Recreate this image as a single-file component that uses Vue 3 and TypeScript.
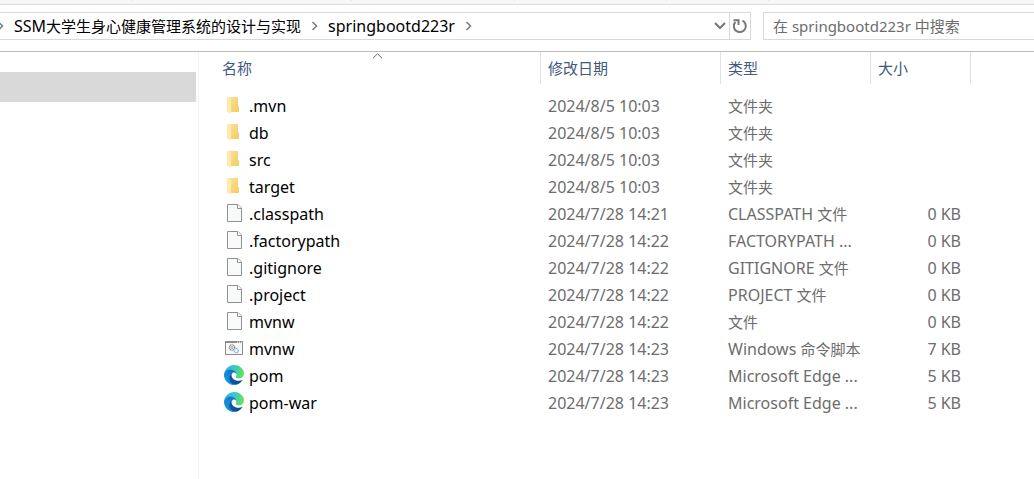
<script setup lang="ts">
import { ref } from 'vue'

type IconKind = 'folder' | 'file' | 'script' | 'edge'

interface Entry {
  name: string
  icon: IconKind
  modified: string
  type: string
  size: string
}

interface Run {
  text: string
  latin: boolean
}

const entries: Entry[] = [
  { name: '.mvn', icon: 'folder', modified: '2024/8/5 10:03', type: '文件夹', size: '' },
  { name: 'db', icon: 'folder', modified: '2024/8/5 10:03', type: '文件夹', size: '' },
  { name: 'src', icon: 'folder', modified: '2024/8/5 10:03', type: '文件夹', size: '' },
  { name: 'target', icon: 'folder', modified: '2024/8/5 10:03', type: '文件夹', size: '' },
  { name: '.classpath', icon: 'file', modified: '2024/7/28 14:21', type: 'CLASSPATH 文件', size: '0 KB' },
  { name: '.factorypath', icon: 'file', modified: '2024/7/28 14:22', type: 'FACTORYPATH ...', size: '0 KB' },
  { name: '.gitignore', icon: 'file', modified: '2024/7/28 14:22', type: 'GITIGNORE 文件', size: '0 KB' },
  { name: '.project', icon: 'file', modified: '2024/7/28 14:22', type: 'PROJECT 文件', size: '0 KB' },
  { name: 'mvnw', icon: 'file', modified: '2024/7/28 14:22', type: '文件', size: '0 KB' },
  { name: 'mvnw', icon: 'script', modified: '2024/7/28 14:23', type: 'Windows 命令脚本', size: '7 KB' },
  { name: 'pom', icon: 'edge', modified: '2024/7/28 14:23', type: 'Microsoft Edge ...', size: '5 KB' },
  { name: 'pom-war', icon: 'edge', modified: '2024/7/28 14:23', type: 'Microsoft Edge ...', size: '5 KB' },
]

const crumbs = ['SSM大学生身心健康管理系统的设计与实现', 'springbootd223r']
const query = ref('')

// Latin runs are set one pixel larger than the Chinese ones.
function runs(text: string): Run[] {
  return (text.match(/[\x20-\x7e]+|[^\x20-\x7e]+/g) ?? []).map((t) => ({
    text: t,
    latin: /^[\x20-\x7e]/.test(t),
  }))
}
</script>

<template>
  <div class="explorer">
    <div class="ribbon"><i></i><i></i><i></i><i></i><i></i></div>

    <header class="toolbar">
      <div class="address">
        <nav class="crumbs" aria-label="路径">
          <svg class="lead" width="4" height="10" viewBox="3 0 4 10" aria-hidden="true">
            <path d="M1.500 1 5.500 5 1.500 9" />
          </svg>
          <template v-for="crumb in crumbs" :key="crumb">
            <a href="#" class="crumb"><span v-for="(r, i) in runs(crumb)" :key="i" :class="{ latin: r.latin }">{{ r.text }}</span></a>
            <svg class="sep" width="7" height="10" viewBox="0 0 7 10" aria-hidden="true">
              <path d="M1.500 1 5.500 5 1.500 9" />
            </svg>
          </template>
        </nav>
        <button class="drop" type="button" aria-label="历史记录">
          <svg width="12" height="8" viewBox="0 0 12 8"><path d="M1 1 6 6 11 1" /></svg>
        </button>
        <button class="refresh" type="button" aria-label="刷新">
          <svg width="16" height="16" viewBox="0 0 16 16">
            <path d="M10.500 2.700A6 6 0 1 1 3.400 4" />
            <path d="M1.500 2.300H6.500V7" />
          </svg>
        </button>
      </div>
      <input v-model="query" class="search" type="text" aria-label="搜索" placeholder="在 springbootd223r 中搜索" />
    </header>

    <div class="body">
      <aside class="tree"><div class="selected"></div></aside>
      <main class="list">
        <table>
          <colgroup>
            <col class="c-name" /><col class="c-date" /><col class="c-type" /><col class="c-size" />
          </colgroup>
          <thead>
            <tr>
              <th>
                <button type="button">名称</button>
                <svg class="sort" width="11" height="6" viewBox="0 0 11 6" aria-hidden="true">
                  <path d="M1 5.200 5.500 .8 10 5.200" />
                </svg>
              </th>
              <th><button type="button">修改日期</button></th>
              <th><button type="button">类型</button></th>
              <th><button type="button">大小</button></th>
            </tr>
          </thead>
          <tbody>
            <tr v-for="(e, n) in entries" :key="n">
              <td class="name">
                <div class="entry">
                  <svg v-if="e.icon === 'folder'" width="20" height="20" viewBox="0 0 20 20">
                    <defs>
                      <linearGradient :id="`fold${n}`" x1="0" y1="0" x2="1" y2="1">
                        <stop offset="0" stop-color="#fbe29a" /><stop offset="1" stop-color="#f2cb62" />
                      </linearGradient>
                    </defs>
                    <path d="M5 2H14V11H15V17H5Z" :fill="`url(#fold${n})`" />
                    <path d="M3 2H5L7 4V18.500L3 17Z" fill="#ffe9ab" />
                  </svg>
                  <svg v-else-if="e.icon === 'file'" width="20" height="20" viewBox="0 0 20 20">
                    <path d="M3.500 1.500H14L17.500 5V18.500H3.500Z" fill="#f8f9f9" stroke="#8f9192" />
                    <path d="M13.500 1.500V5.500H17.500" fill="#fff" stroke="#8f9192" />
                  </svg>
                  <svg v-else-if="e.icon === 'script'" width="20" height="20" viewBox="0 0 20 20">
                    <rect x="1.500" y="3.500" width="17" height="13" fill="#f8f8f8" stroke="#8b8d8f" />
                    <path d="M1 4H19" stroke="#8b8d8f" stroke-width="2" />
                    <path d="M13 4.200h1M15 4.200h1M17 4.200h1" stroke="#fff" />
                    <circle cx="8" cy="9.500" r="2.700" fill="#eee" stroke="#85878a" stroke-width="1.200" stroke-dasharray="1.200 .5" />
                    <circle cx="8" cy="9.500" r="1" fill="#fff" stroke="#85878a" stroke-width=".7" />
                    <circle cx="12.200" cy="12.500" r="2.200" fill="#e9f5fc" stroke="#7fb2d0" stroke-width="1.200" stroke-dasharray="1.100 .4" />
                    <circle cx="12.200" cy="12.500" r=".7" fill="#fff" />
                  </svg>
                  <svg v-else width="20" height="20" viewBox="0 0 256 256">
                    <defs>
                      <linearGradient :id="`deep${n}`" x1="60" y1="177" x2="240" y2="177" gradientUnits="userSpaceOnUse">
                        <stop offset="0" stop-color="#0c59a4" /><stop offset="1" stop-color="#114a8b" />
                      </linearGradient>
                      <linearGradient :id="`mid${n}`" x1="150" y1="100" x2="45" y2="225" gradientUnits="userSpaceOnUse">
                        <stop offset="0" stop-color="#1470b8" /><stop offset=".5" stop-color="#1689d6" /><stop offset="1" stop-color="#1291e0" />
                      </linearGradient>
                      <linearGradient :id="`top${n}`" x1="20" y1="60" x2="240" y2="110" gradientUnits="userSpaceOnUse">
                        <stop offset="0" stop-color="#2fb0e6" /><stop offset=".35" stop-color="#33c3dc" /><stop offset=".65" stop-color="#46cf9f" /><stop offset="1" stop-color="#66e25e" />
                      </linearGradient>
                    </defs>
                    <path :fill="`url(#deep${n})`" d="M231 190.500a93.700 93.700 0 0 1-10.500 4.700 101.900 101.900 0 0 1-35.900 6.500c-47.300 0-88.500-32.500-88.500-74.300a31.500 31.500 0 0 1 16.400-27.300c-42.800 1.800-53.800 46.400-53.800 72.500 0 73.900 68.100 81.400 82.800 81.400 7.900 0 19.800-2.300 27-4.600l1.300-.4a128.300 128.300 0 0 0 66.600-52.800 4 4 0 0 0-5.400-5.700z" />
                    <path :fill="`url(#mid${n})`" d="M105.700 241.400a79.200 79.200 0 0 1-22.700-21.300 80.700 80.700 0 0 1 29.500-120c3.200-1.500 8.500-4.100 15.600-4a32.400 32.400 0 0 1 25.700 13 31.900 31.900 0 0 1 6.300 18.700c0-.2 24.500-79.600-80-79.600-43.900 0-80 41.600-80 78.200a130.200 130.200 0 0 0 12.100 56 128 128 0 0 0 156.400 67.100 75.500 75.500 0 0 1-62.800-8z" />
                    <path :fill="`url(#top${n})`" d="M152.300 148.900c-.8 1-3.300 2.500-3.300 5.700 0 2.600 1.700 5.100 4.700 7.200 14.400 10 41.500 8.700 41.600 8.700a59.600 59.600 0 0 0 30.300-8.300 61.400 61.400 0 0 0 30.400-52.900c.3-22.400-8-37.300-11.300-43.900C223.500 23.900 177.700 0 128 0A128 128 0 0 0 0 126.200c.5-36.500 36.800-66 80-66 3.500 0 23.500.3 42 10 16.300 8.600 24.900 18.900 30.800 29.200 6.200 10.700 7.300 24.100 7.300 29.500s-2.700 13.300-7.800 20z" />
                  </svg>
                  <span class="latin">{{ e.name }}</span>
                </div>
              </td>
              <td class="latin">{{ e.modified }}</td>
              <td><span v-for="(r, i) in runs(e.type)" :key="i" :class="{ latin: r.latin }">{{ r.text }}</span></td>
              <td class="latin size">{{ e.size }}</td>
            </tr>
          </tbody>
        </table>
      </main>
    </div>
  </div>
</template>

<style>
body {
  margin: 0;
  background: #fff;
}
</style>

<style scoped>
.explorer {
  display: flex;
  flex-direction: column;
  min-height: 100vh;
  overflow: hidden;
  font-family: "Noto Sans", "Noto Sans CJK SC", sans-serif;
  font-size: 15px;
  color: #6d6d6d;
}
button,
input {
  font: inherit;
  color: inherit;
  margin: 0;
  padding: 0;
  border: 0;
  background: none;
  border-radius: 0;
}
.latin {
  font-size: 16px;
  white-space: pre;
}
.ribbon {
  display: grid;
  grid-template-columns: 132px 220px 163px 152px 102px;
  height: 4px;
  background: #f5f6f7;
  border-bottom: 1px solid #dadbdc;
}
.ribbon i {
  height: 1px;
  border-right: 1px solid #e2e3e4;
}
.toolbar {
  display: flex;
  gap: 12px;
  padding: 7px 0 11px;
  border-bottom: 1px solid #bcbcbc;
}
.address {
  flex: 1;
  display: flex;
  height: 26px;
  border: 1px solid #d9d9d9;
  border-left: 0;
}
.crumbs {
  flex: 1;
  display: flex;
  align-items: center;
}
.crumb {
  display: flex;
  align-items: baseline;
  margin: 0 10px;
  color: #000;
  text-decoration: none;
  line-height: 26px;
  white-space: nowrap;
}
.crumbs svg,
.drop svg,
.refresh svg {
  fill: none;
  stroke: #777;
  stroke-width: 2;
}
.crumbs svg {
  stroke-width: 1.5;
}
.drop {
  display: flex;
  align-items: center;
  justify-content: center;
  width: 18px;
}
.refresh {
  display: flex;
  align-items: center;
  justify-content: center;
  box-sizing: border-box;
  width: 21px;
  border-left: 1px solid #d9d9d9;
}
.search {
  box-sizing: border-box;
  width: 271px;
  height: 28px;
  padding-left: 9px;
  border: 1px solid #d9d9d9;
  border-right: 0;
}
.search::placeholder {
  color: #6d6d6d;
  opacity: 1;
}
.body {
  flex: 1;
  display: flex;
}
.tree {
  box-sizing: border-box;
  width: 199px;
  padding: 20px 2px 0 0;
  border-right: 1px solid #f2f2f2;
}
.selected {
  height: 30px;
  background: #d9d9d9;
}
.list {
  flex: 1;
  padding-left: 15px;
}
table {
  width: 757px;
  table-layout: fixed;
  border-collapse: separate;
  border-spacing: 0;
}
.c-name {
  width: 327px;
}
.c-date {
  width: 180px;
}
.c-type {
  width: 150px;
}
.c-size {
  width: 100px;
}
th {
  position: relative;
  height: 32px;
  padding: 0 7px 0 8px;
  border-right: 1px solid #e2e2e2;
  font-weight: 400;
  text-align: left;
}
th + th {
  padding-left: 7px;
}
th button {
  display: block;
  width: 100%;
  line-height: 32px;
  text-align: left;
  color: #42597c;
}
.sort {
  position: absolute;
  top: 1px;
  left: 158px;
  fill: none;
  stroke: #6a6a6a;
}
tbody::before {
  content: "";
  display: block;
  height: 9px;
}
td {
  height: 27px;
  padding: 0 8px 0 7px;
  line-height: 26px;
  vertical-align: top;
  white-space: nowrap;
}
.name {
  padding: 0 8px 0 10px;
  color: #000;
}
.entry {
  display: flex;
  align-items: flex-start;
  gap: 5px;
  height: 27px;
}
.entry svg {
  flex: none;
  margin-top: 2px;
}
.size {
  padding-right: 10px;
  text-align: right;
}
</style>
